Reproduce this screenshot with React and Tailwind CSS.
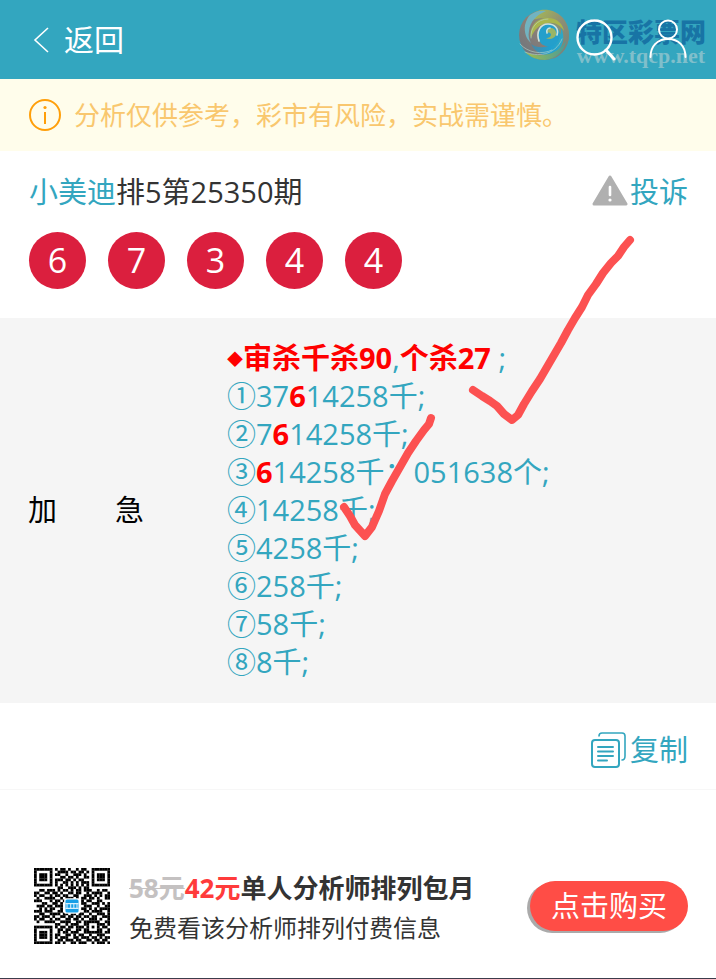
import React from "react";

const balls = [6, 7, 3, 4, 4];

const picks = [
  { no: "①", before: "37", hit: "6", after: "14258千;" },
  { no: "②", before: "7", hit: "6", after: "14258千;" },
  { no: "③", before: "", hit: "6", after: "14258千；051638个;" },
  { no: "④", before: "14258千;" },
  { no: "⑤", before: "4258千;" },
  { no: "⑥", before: "258千;" },
  { no: "⑦", before: "58千;" },
  { no: "⑧", before: "8千;" },
];

const qrRows = [
  "11111110101101001011001111111",
  "10000010011110110110101000001",
  "10111010110010011101001011101",
  "10111010001101101001101011101",
  "10111010111011010110001011101",
  "10000010100110101011101000001",
  "11111110101010101010101111111",
  "00000000011001110101100000000",
  "00110111010110101101110010110",
  "11001101101001101100101111001",
  "10110010110110011001110101011",
  "01001111001011101011011010011",
  "11100010110100000010110011000",
  "00011001101000000011001110101",
  "01110110111000000001110010011",
  "00101011001000000011010101111",
  "11101110011000000001101111001",
  "00110011110110110110010011101",
  "11011101001101101101101100111",
  "10110010110011011010011101001",
  "01001111001111001101111110011",
  "00000000110010111001100011101",
  "11111110101101101110101010110",
  "10000010011011001101100011001",
  "10111010010110111001111111011",
  "10111010110011010110010011100",
  "10111010101110011011101101011",
  "10000010011011101100110110110",
  "11111110110100110111001011101",
];

const QrCode = () => (
  <svg className="w-[76px] h-[76px]" viewBox="0 0 29 29">
    {qrRows.map((row, y) =>
      row.split("").map((cell, x) =>
        cell === "1" ? (
          <rect key={`${x}-${y}`} x={x} y={y} width="1.05" height="1.05" fill="#000" />
        ) : null
      )
    )}
    <rect x="11.5" y="11.5" width="6" height="6" rx="0.6" fill="#fff" />
    <rect x="12" y="12" width="5" height="5" rx="0.6" fill="#179fe6" />
    <path d="M12 13.6h5M12 15.4h5M12.6 13.6v1.8M14 13.6v1.8M15.2 13.6v1.8M16.4 13.6v1.8" stroke="#d8f0fc" strokeWidth="0.4" />
  </svg>
);

const Watermark = () => (
  <div className="absolute right-2.5 top-1.5 flex items-start pointer-events-none">
    <svg className="w-[58px] h-[58px]" viewBox="0 0 58 58" fill="none">
      <defs>
        <linearGradient id="rim" x1="0" y1="1" x2="1" y2="0">
          <stop offset="0" stopColor="#667580" />
          <stop offset="0.5" stopColor="#8d7f76" />
          <stop offset="1" stopColor="#7fb070" />
        </linearGradient>
        <linearGradient id="band" x1="0" y1="0" x2="1" y2="1">
          <stop offset="0" stopColor="#a9c04e" />
          <stop offset="0.5" stopColor="#8f8f74" />
          <stop offset="1" stopColor="#6f8080" />
        </linearGradient>
        <linearGradient id="sea" x1="0" y1="0" x2="1" y2="0">
          <stop offset="0" stopColor="#4f86a0" />
          <stop offset="0.6" stopColor="#1f9fd0" />
          <stop offset="1" stopColor="#2fa8c4" />
        </linearGradient>
        <linearGradient id="leaf" x1="0" y1="0" x2="1" y2="0">
          <stop offset="0" stopColor="#a3bd4c" />
          <stop offset="1" stopColor="#4a9c98" />
        </linearGradient>
      </defs>
      <circle cx="28" cy="29" r="25" fill="url(#rim)" />
      <path d="M25 4c15-2 28 9 28 25 0 11-6 20-16 24 8-9 11-19 7-28C40 14 32 10 20 13c-4 1-6 0-5-3 3-3 6-5 10-6z" fill="url(#band)" />
      <path d="M14 9c5-4 11-5 16-4C20 9 14 16 13 25c-1 5 0 9 2 12C10 33 8 26 9 19c1-4 3-8 5-10z" fill="#72b3c0" />
      <path d="M15 38c7 5 16 4 22-1 6-4 9-10 8-16 5 11 2 22-8 27-8 3-17 0-22-10z" fill="url(#sea)" />
      <path d="M9 46c9 4 18 4 27 1 7-3 11-7 14-12-2 10-10 18-21 19-8 0-15-3-20-8z" fill="url(#leaf)" />
      <path d="M15 32c-2-12 6-20 17-20 9 0 15 6 16 13-4-6-9-9-16-8-9 1-14 7-17 15z" fill="#a9b64c" />
      <path d="M23 33c-3-8 2-14 9-15 7 0 12 5 12 11-1 8-7 12-14 11-4-1-6-3-7-7z" fill="#249fcb" />
      <path d="M31 27c0-3 2-5 5-5 3 1 5 4 4 7-2 4-7 5-10 3 3 0 5-1 5-4-1-1-2-2-4-1z" fill="#98b566" />
      <path d="M4 38c8 9 22 11 32 6M15 32c-1-10 6-19 17-19M9 46c12 5 30 4 37-13" stroke="#b9d6cb" strokeOpacity="0.6" strokeLinecap="round" />
      <path d="M23 35c-3-9 1-17 9-17 7 0 11 5 9 11M31 27c-1-3 1-5 3-5" stroke="#cfe3dd" strokeWidth="1.6" strokeLinecap="round" />
    </svg>
    <div className="ml-0.5 mt-3 flex flex-col items-center">
      <span className="text-[26px] leading-7 font-black text-[#1874a5]">特区彩票网</span>
      <span className="font-['Liberation_Serif',serif] font-bold text-[22px] leading-5 text-[#80bfcb]">www.tqcp.net</span>
    </div>
  </div>
);

const Header = () => (
  <header className="relative h-[79px] bg-[#33a6bf] flex items-center justify-between pl-8 pr-7 text-white">
    <a href="#back" className="flex items-center gap-3 text-[30px]">
      <svg className="w-5 h-7" viewBox="0 0 20 28" fill="none" stroke="#fff" strokeWidth="1.6">
        <path d="M16 2L3 14l13 12" />
      </svg>
      <span>返回</span>
    </a>
    <Watermark />
    <div className="relative flex gap-8">
      <button aria-label="搜索">
        <svg className="w-10 h-11" viewBox="0 0 40 44" fill="none" stroke="#fff" strokeWidth="2.4" strokeLinecap="round">
          <circle cx="18.5" cy="19.5" r="17" />
          <path d="M30 32l8 9" strokeWidth="3" />
        </svg>
      </button>
      <button aria-label="我的">
        <svg className="w-10 h-11" viewBox="0 0 40 44" fill="none" stroke="#fff" strokeWidth="2" strokeLinecap="round">
          <circle cx="20" cy="11.5" r="9" />
          <path d="M2.5 39c0-11 7-18 17.500-18s17.500 7 17.500 18" />
        </svg>
      </button>
    </div>
  </header>
);

const Marks = () => (
  <svg
    className="absolute left-[336px] top-[232px] w-[304px] h-[312px] pointer-events-none"
    viewBox="336 232 304 312"
    fill="none"
    stroke="#fc5151"
    strokeWidth="8"
    strokeLinecap="round"
    strokeLinejoin="round"
  >
    <path d="M473 390L482 396L490 401L497 406L504 414L512 420L518 415L524 404L532 391L540 379L547 367L554 355L561 343L568 330L575 318L582 307L588 295L596 284L603 273L611 263L618 256L624 247L630 240" />
    <path d="M344 507L350 516L355 525L365 536L372 527L379 511L385 494L392 481L400 467L408 453L416 441L424 430L429 424L431 418" />
  </svg>
);

const App = () => {
  return (
    <div className="relative bg-white text-[#333] font-['Open_Sans','Noto_Sans_CJK_SC',sans-serif]">
      <Header />

      <div className="h-[72px] bg-[#fffdeb] flex items-center gap-3 px-7 text-[26px] text-[#f9c76e]">
        <svg className="w-[34px] h-[34px] shrink-0" viewBox="0 0 34 34" fill="none" stroke="#ff9f0a" strokeWidth="2">
          <circle cx="17" cy="17" r="15" />
          <path d="M17 14v12" />
          <circle cx="17" cy="9.5" r="1.6" fill="#ff9f0a" stroke="none" />
        </svg>
        <p className="whitespace-nowrap">分析仅供参考，彩市有风险，实战需谨慎。</p>
      </div>

      <section className="h-[167px] pt-5 pl-[29px] pr-7">
        <div className="flex items-center justify-between text-[29px] leading-[42px]">
          <h1>
            <a href="#analyst" className="text-[#33a6bf]">小美迪</a>排5第25350期
          </h1>
          <a href="#complain" className="flex items-center gap-0.5 text-[#33a6bf]">
            <svg className="w-9 h-[34px]" viewBox="0 0 36 34">
              <path d="M18 2L34 29H2z" fill="#b0b0b0" stroke="#b0b0b0" strokeWidth="3" strokeLinejoin="round" />
              <path d="M18 12v8" stroke="#fff" strokeWidth="2.6" strokeLinecap="round" />
              <circle cx="18" cy="25" r="1.6" fill="#fff" />
            </svg>
            投诉
          </a>
        </div>
        <div className="mt-[19px] flex gap-[22px]">
          {balls.map((n, i) => (
            <span
              key={i}
              className="w-[57px] h-[57px] rounded-full bg-[#db1f3e] text-white text-[34px] flex items-center justify-center"
            >
              {n}
            </span>
          ))}
        </div>
      </section>

      <section className="bg-[#f5f5f5] flex items-center pt-5 pb-[22px] pl-7 pr-4 text-[29px] leading-[38px] min-h-[385px]">
        <div className="w-[199px] shrink-0 text-black whitespace-pre">加　　急</div>
        <div className="text-[#33a6bf] whitespace-nowrap">
          <p>
            <b className="text-[#f00]">
              <span className="text-base leading-none align-[4px]">◆</span>审杀千杀90
            </b>
            ,<b className="text-[#f00]">个杀27</b>
            {" ;"}
          </p>
          {picks.map((p) => (
            <p key={p.no}>
              {p.no}
              {p.before}
              {p.hit && <b className="text-[#f00]">{p.hit}</b>}
              {p.after}
            </p>
          ))}
        </div>
      </section>

      <div className="h-[87px] flex items-center justify-end px-7 pt-2 border-b border-[#f7f7f7]">
        <button className="flex items-center gap-[3px] text-[29px] text-[#33a6bf]">
          <svg className="w-9 h-9" viewBox="0 0 36 36" fill="none" stroke="#33a6bf" strokeWidth="2" strokeLinecap="round">
            <rect x="1" y="8" width="27" height="27" rx="3" />
            <path d="M8 4c0-2 1-3 3-3h20c2 0 3 1 3 3v20c0 2-1 4-3 4" strokeWidth="1.6" />
            <path d="M7 15h15M7 19.5h15M7 24h15M7 28.5h9" />
          </svg>
          复制
        </button>
      </div>

      <footer className="h-[189px] pt-11 pl-[34px] pr-7 flex items-center border-b border-[#3c3c4b]">
        <QrCode />
        <div className="ml-[19px] pt-1 flex-1 whitespace-nowrap">
          <p className="text-[26px] leading-10 font-bold">
            <del className="text-[#c4c1c1] decoration-1">58元</del>
            <span className="text-[#ff3b3b]">42元</span>单人分析师排列包月
          </p>
          <p className="text-2xl leading-10">免费看该分析师排列付费信息</p>
        </div>
        <button className="w-[158px] h-[50px] rounded-full bg-[#ff4d46] text-white text-[29px] leading-[50px] shadow-[-3px_2px_0_#aaa]">
          点击购买
        </button>
      </footer>

      <Marks />
    </div>
  );
};

export default App;
